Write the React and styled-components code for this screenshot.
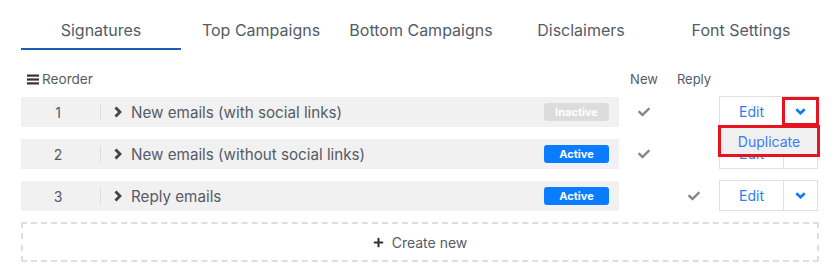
import React from "react";
import styled, { createGlobalStyle } from "styled-components";
import { FaCheck, FaPlus } from "react-icons/fa";

const Global = createGlobalStyle`
  html, body { margin: 0; padding: 0; background: #fff; }
  body { font-family: Inter, "Open Sans", sans-serif; color: #555; }
`;

const Page = styled.div`
  width: 798px;
  margin-left: 21px;
  padding-top: 10px;
  position: relative;
`;

const Tabs = styled.div`
  display: flex;
  width: 800px;
`;

const Tab = styled.div`
  width: 160px;
  height: 40px;
  padding-top: 2px;
  display: flex;
  align-items: center;
  justify-content: center;
  font-size: 16px;
  color: #555b66;
  border-bottom: 2px solid ${(p) => (p.$active ? "#1d5fb8" : "transparent")};
  box-sizing: border-box;
`;

const HeadRow = styled.div`
  display: flex;
  align-items: center;
  height: 20px;
  margin-top: 19px;
  margin-bottom: 7px;
  font-size: 13px;
  color: #555b66;
`;

const Reorder = styled.div`
  width: 598px;
  display: flex;
  align-items: center;
  gap: 3px;
  padding-left: 6px;
  box-sizing: border-box;
  font-size: 13.6px;
`;

const ColHead = styled.div`
  width: 50px;
  text-align: center;
`;

const List = styled.div`
  display: flex;
  flex-direction: column;
  gap: 11px;
`;

const Row = styled.div`
  display: flex;
  align-items: flex-end;
  height: 31px;
`;

const Main = styled.div`
  width: 598px;
  height: 30px;
  background: #f1f1f1;
  display: flex;
  align-items: center;
  padding-right: 10px;
  box-sizing: border-box;
`;

const Num = styled.div`
  width: 74px;
  text-align: center;
  font-size: 14px;
  color: #555b66;
`;

const Divider = styled.div`
  width: 1px;
  height: 16px;
  background: #dcdcdc;
  margin-left: 5px;
  margin-right: 13px;
`;

const Arrow = styled.span`
  display: flex;
  margin-right: 9px;
`;

const Title = styled.div`
  flex: 1;
  font-size: 15.2px;
  color: #555b66;
`;

const Badge = styled.div`
  width: 65px;
  height: 18px;
  border-radius: 3px;
  background: ${(p) => (p.$active ? "#0a7cff" : "#dcdcdc")};
  color: #fff;
  font-size: 11px;
  font-weight: 700;
  display: flex;
  align-items: center;
  justify-content: center;
`;

const CheckCell = styled.div`
  width: 50px;
  height: 30px;
  display: flex;
  align-items: center;
  justify-content: center;
  color: #888;
`;

const Actions = styled.div`
  width: 99px;
  height: 31px;
  display: flex;
  border: 1px solid #e0e0e0;
  box-sizing: border-box;
  position: relative;
`;

const EditBtn = styled.div`
  width: 63px;
  display: flex;
  align-items: center;
  justify-content: center;
  font-size: 14px;
  color: #2a7ef0;
  border-right: 1px solid #e0e0e0;
`;

const Caret = styled.div`
  flex: 1;
  display: flex;
  align-items: center;
  justify-content: center;
`;

const Highlight = styled.div`
  position: absolute;
  left: 62px;
  top: 0px;
  width: 37px;
  height: 29px;
  border: 3px solid #e5141f;
  box-sizing: border-box;
  z-index: 2;
`;

const Menu = styled.div`
  position: absolute;
  left: -2px;
  top: 28px;
  width: 102px;
  height: 32px;
  border: 3px solid #e5141f;
  background: #f0f0f0;
  box-sizing: border-box;
  display: flex;
  align-items: center;
  justify-content: center;
  font-size: 14px;
  color: #3b7cf4;
  z-index: 3;
`;

const CreateNew = styled.div`
  margin-top: 11px;
  height: 40px;
  border: 2px dashed #dedede;
  box-sizing: border-box;
  display: flex;
  align-items: center;
  justify-content: center;
  gap: 8px;
  font-size: 14px;
  color: #555b66;
  svg { color: #333; }
`;

const Bars = () => (
  <svg width="12" height="11" viewBox="0 0 12 11">
    <rect x="0" y="0.5" width="12" height="2.2" fill="#333" />
    <rect x="0" y="4.4" width="12" height="2.2" fill="#333" />
    <rect x="0" y="8.3" width="12" height="2.2" fill="#333" />
  </svg>
);

const ChevRight = () => (
  <svg width="8" height="12" viewBox="0 0 8 12">
    <polyline points="1.5,1.4 6,6 1.5,10.6" fill="none" stroke="#444" strokeWidth="2.8" />
  </svg>
);

const ChevDown = () => (
  <svg width="11" height="7" viewBox="0 0 11 7">
    <polyline points="1.3,1.3 5.5,5.3 9.7,1.3" fill="none" stroke="#0a7cff" strokeWidth="2.6" />
  </svg>
);

const rows = [
  { n: 1, title: "New emails (with social links)", active: false, newC: true, reply: false, menu: true },
  { n: 2, title: "New emails (without social links)", active: true, newC: true, reply: false },
  { n: 3, title: "Reply emails", active: true, newC: false, reply: true },
];

export default function App() {
  return (
    <>
      <Global />
      <Page>
        <Tabs>
          <Tab $active>Signatures</Tab>
          <Tab>Top Campaigns</Tab>
          <Tab>Bottom Campaigns</Tab>
          <Tab>Disclaimers</Tab>
          <Tab>Font Settings</Tab>
        </Tabs>
        <HeadRow>
          <Reorder>
            <Bars />
            Reorder
          </Reorder>
          <ColHead>New</ColHead>
          <ColHead>Reply</ColHead>
        </HeadRow>
        <List>
          {rows.map((r) => (
            <Row key={r.n}>
              <Main>
                <Num>{r.n}</Num>
                <Divider />
                <Arrow>
                  <ChevRight />
                </Arrow>
                <Title>{r.title}</Title>
                <Badge $active={r.active}>{r.active ? "Active" : "Inactive"}</Badge>
              </Main>
              <CheckCell>{r.newC && <FaCheck size={12} />}</CheckCell>
              <CheckCell>{r.reply && <FaCheck size={12} />}</CheckCell>
              <Actions>
                <EditBtn>Edit</EditBtn>
                <Caret>
                  <ChevDown />
                </Caret>
                {r.menu && (
                  <>
                    <Highlight />
                    <Menu>Duplicate</Menu>
                  </>
                )}
              </Actions>
            </Row>
          ))}
        </List>
        <CreateNew>
          <FaPlus size={11} />
          Create new
        </CreateNew>
      </Page>
    </>
  );
}
